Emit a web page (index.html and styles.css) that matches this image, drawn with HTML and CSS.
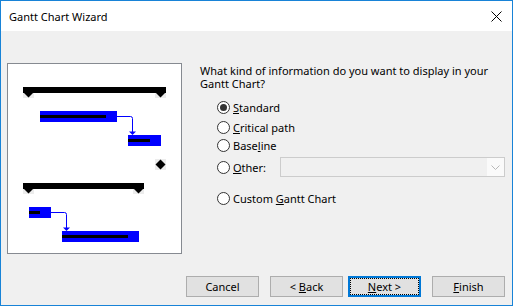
FILE: index.html
```html
<!DOCTYPE html>
<html lang="en">
<head>
    <meta charset="UTF-8">
    <title>Gantt Chart Wizard</title>
    <link rel="stylesheet" href="styles.css">
</head>
<body>
    <div class="window">
        <div class="titlebar">
            <span class="title">Gantt Chart Wizard</span>
            <svg class="close" width="11" height="11" viewBox="0 0 11 11">
                <path d="M0.5 0.5 L10.5 10.5 M10.5 0.5 L0.5 10.5" stroke="#000" stroke-width="1"/>
            </svg>
        </div>

        <div class="content">
            <div class="preview">
                <svg width="173" height="189" viewBox="0 0 173 189">
                    <!-- first summary task -->
                    <rect x="15" y="23" width="143" height="6" fill="#000"/>
                    <rect x="15" y="29" width="11" height="5" fill="#ececec"/>
                    <polygon points="16,29 25,29 20.5,33.5" fill="#000"/>
                    <rect x="147" y="29" width="11" height="5" fill="#ececec"/>
                    <polygon points="148,29 157,29 152.5,33.5" fill="#000"/>

                    <rect x="32" y="47" width="77" height="11" fill="#0000ff"/>
                    <rect x="32" y="51" width="66" height="3" fill="#000"/>
                    <path d="M109 52.5 H122.5 Q124.5 52.5 124.5 54.5 V68" stroke="#0000ff" fill="none"/>
                    <polygon points="121,67.5 128,67.5 124.5,71" fill="#0000ff"/>

                    <rect x="120" y="71" width="33" height="11" fill="#0000ff"/>
                    <rect x="120" y="75" width="22" height="3" fill="#000"/>

                    <!-- milestone -->
                    <rect x="147" y="95" width="11" height="11" fill="#ececec"/>
                    <polygon points="152.5,95.5 157.5,100.5 152.5,105.5 147.5,100.5" fill="#000"/>

                    <!-- second summary task -->
                    <rect x="15" y="119" width="121" height="6" fill="#000"/>
                    <rect x="15" y="125" width="11" height="5" fill="#ececec"/>
                    <polygon points="16,125 25,125 20.5,129.5" fill="#000"/>
                    <rect x="125" y="125" width="11" height="5" fill="#ececec"/>
                    <polygon points="126,125 135,125 130.5,129.5" fill="#000"/>

                    <rect x="21" y="143" width="22" height="11" fill="#0000ff"/>
                    <rect x="21" y="147" width="11" height="3" fill="#000"/>
                    <path d="M43 148.5 H56.5 Q58.5 148.5 58.5 150.5 V164" stroke="#0000ff" fill="none"/>
                    <polygon points="55,163.5 62,163.5 58.5,167" fill="#0000ff"/>

                    <rect x="54" y="167" width="77" height="11" fill="#0000ff"/>
                    <rect x="54" y="171" width="66" height="3" fill="#000"/>
                </svg>
            </div>

            <div class="options">
                <p class="question">What kind of information do you want to display in your Gantt Chart?</p>

                <div class="radio-list">
                    <label class="radio row-standard">
                        <span class="dot checked"></span>
                        <span><u>S</u>tandard</span>
                    </label>
                    <label class="radio row-critical">
                        <span class="dot"></span>
                        <span><u>C</u>ritical path</span>
                    </label>
                    <label class="radio row-baseline">
                        <span class="dot"></span>
                        <span>Base<u>l</u>ine</span>
                    </label>
                    <div class="radio row-other">
                        <span class="dot"></span>
                        <span class="other-label"><u>O</u>ther:</span>
                        <div class="combo">
                            <span class="combo-arrow">
                                <svg width="9" height="5" viewBox="0 0 9 5">
                                    <path d="M0.5 0.5 L4.5 4.5 L8.5 0.5" stroke="#b8b8b8" fill="none"/>
                                </svg>
                            </span>
                        </div>
                    </div>
                    <label class="radio row-custom">
                        <span class="dot"></span>
                        <span>Custom <u>G</u>antt Chart</span>
                    </label>
                </div>
            </div>
        </div>

        <div class="buttons">
            <button class="btn"><span>Cancel</span></button>
            <button class="btn btn-back"><span>&lt; <u>B</u>ack</span></button>
            <button class="btn btn-next"><span class="focus"><span><u>N</u>ext &gt;</span></span></button>
            <button class="btn btn-finish"><span><u>F</u>inish</span></button>
        </div>
    </div>
</body>
</html>
```

FILE: styles.css
```css
* {
    box-sizing: border-box;
}
body {
    margin: 0;
    font-family: "Noto Sans", "Open Sans", sans-serif;
    font-size: 11px;
    color: #000;
}
.window {
    width: 513px;
    height: 306px;
    border: 1px solid #1883d7;
    background: #f0f0f0;
    display: flex;
    flex-direction: column;
}
.titlebar {
    height: 30px;
    background: #fff;
    display: flex;
    align-items: center;
    justify-content: space-between;
    padding: 0 10px 0 8px;
}
.title {
    font-size: 11px;
}
.content {
    display: flex;
    padding: 32px 6px 0 6px;
}
.preview {
    width: 175px;
    height: 191px;
    border: 1px solid #868a91;
    background: #fff;
}
.preview svg {
    display: block;
}
.options {
    margin-left: 18px;
    flex: 1;
}
.question {
    margin: 1px 0 0 0;
    line-height: 13px;
    width: 305px;
}
.radio-list {
    display: flex;
    flex-direction: column;
    padding-left: 17px;
}
.radio {
    display: flex;
    align-items: center;
    height: 13px;
    line-height: 13px;
}
.row-standard {
    margin-top: 11px;
}
.row-critical {
    margin-top: 7px;
}
.row-baseline {
    margin-top: 5px;
}
.row-other {
    margin-top: 5px;
    height: 20px;
}
.row-custom {
    margin-top: 15px;
}
.dot {
    width: 13px;
    height: 13px;
    border: 1px solid #333;
    border-radius: 50%;
    background: #fff;
    margin-right: 3px;
    display: flex;
    align-items: center;
    justify-content: center;
    flex-shrink: 0;
}
.dot.checked::after {
    content: "";
    width: 7px;
    height: 7px;
    border-radius: 50%;
    background: #333;
}
.other-label {
    width: 47px;
}
.combo {
    width: 225px;
    height: 20px;
    border: 1px solid #cccccc;
    background: #f0f0f0;
    display: flex;
    justify-content: flex-end;
}
.combo-arrow {
    width: 17px;
    background: #fafafa;
    display: flex;
    align-items: center;
    justify-content: center;
}
.combo-arrow svg {
    display: block;
}
.buttons {
    margin-top: auto;
    display: flex;
    justify-content: flex-end;
    padding: 0 7px 8px 0;
}
.btn {
    width: 73px;
    height: 21px;
    border: 1px solid #adadad;
    background: #e1e1e1;
    font-family: "Noto Sans", "Open Sans", sans-serif;
    font-size: 11px;
    color: #000;
    padding: 0;
    margin-left: 11px;
    display: flex;
    align-items: center;
    justify-content: center;
}
.btn-next {
    margin-left: 5px;
    border: 2px solid #0078d7;
}
.btn-next .focus {
    width: 100%;
    height: 100%;
    border: 1px dotted #000;
    display: flex;
    align-items: center;
    justify-content: center;
}
```
